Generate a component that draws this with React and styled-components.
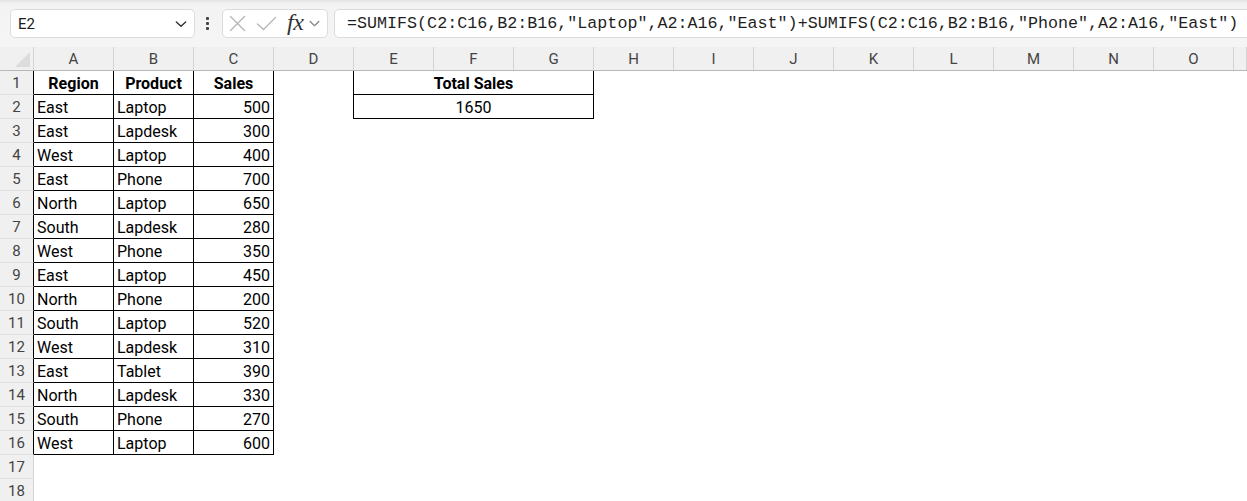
import React from 'react';
import styled, { createGlobalStyle } from 'styled-components';

const GlobalStyle = createGlobalStyle`
  html, body { margin: 0; padding: 0; background: #ffffff; overflow: hidden; }
  body { font-family: Roboto, "Liberation Sans", sans-serif; }
`;

const COLS = ['A', 'B', 'C', 'D', 'E', 'F', 'G', 'H', 'I', 'J', 'K', 'L', 'M', 'N', 'O'];
const GRID = `34px repeat(${COLS.length}, 80px) 1fr`;

const data = [
  ['East', 'Laptop', 500],
  ['East', 'Lapdesk', 300],
  ['West', 'Laptop', 400],
  ['East', 'Phone', 700],
  ['North', 'Laptop', 650],
  ['South', 'Lapdesk', 280],
  ['West', 'Phone', 350],
  ['East', 'Laptop', 450],
  ['North', 'Phone', 200],
  ['South', 'Laptop', 520],
  ['West', 'Lapdesk', 310],
  ['East', 'Tablet', 390],
  ['North', 'Lapdesk', 330],
  ['South', 'Phone', 270],
  ['West', 'Laptop', 600],
];

const Page = styled.div`
  width: 1247px;
  height: 501px;
  overflow: hidden;
  background: #ffffff;
`;

const Toolbar = styled.div`
  display: flex;
  align-items: center;
  height: 47px;
  padding: 9px 0 9px 10px;
  box-sizing: border-box;
  background: linear-gradient(#e4e4e4 0px, #f3f3f3 4px, #f5f5f5 100%);
`;

const NameBox = styled.div`
  display: flex;
  align-items: center;
  justify-content: space-between;
  width: 185px;
  height: 29px;
  box-sizing: border-box;
  padding: 0 6px 0 7px;
  background: #fff;
  border: 1px solid #dcdcdc;
  border-radius: 5px;
  font-size: 15px;
  color: #1a1a1a;
`;

const Dots = styled.div`
  display: flex;
  flex-direction: column;
  gap: 2px;
  margin: 0 13px 0 11px;
  span {
    width: 3px;
    height: 3px;
    background: #444;
    border-radius: 1px;
  }
`;

const FxBox = styled.div`
  display: flex;
  align-items: center;
  width: 106px;
  height: 29px;
  box-sizing: border-box;
  padding: 0 2px 0 5px;
  gap: 9px;
  background: #fff;
  border: 1px solid #dcdcdc;
  border-radius: 5px;
`;

const Fx = styled.span`
  font-family: "Liberation Serif", serif;
  font-style: italic;
  font-size: 24px;
  line-height: 1;
  color: #333;
  margin: -3px -4px 0 1px;
  letter-spacing: -0.5px;
`;

const FormulaInput = styled.div`
  flex: 1;
  display: flex;
  align-items: center;
  height: 29px;
  margin-left: 6px;
  margin-right: -20px;
  box-sizing: border-box;
  padding-left: 12px;
  background: #fff;
  border: 1px solid #dcdcdc;
  border-radius: 5px;
  font-family: "Liberation Mono", "DejaVu Sans Mono", monospace;
  font-size: 16.7px;
  color: #1f1f1f;
  white-space: nowrap;
  overflow: hidden;
`;

const HeaderRow = styled.div`
  display: grid;
  grid-template-columns: ${GRID};
  height: 24px;
  background: #f0f0f0;
  border-bottom: 1px solid #b8b8b8;
  box-sizing: border-box;
`;

const Corner = styled.div`
  position: relative;
  border-right: 1px solid #d4d4d4;
  &::after {
    content: '';
    position: absolute;
    right: 3px;
    bottom: 3px;
    border-style: solid;
    border-width: 0 0 15px 15px;
    border-color: transparent transparent #dcdcdc transparent;
  }
`;

const ColHead = styled.div`
  display: flex;
  align-items: center;
  justify-content: center;
  border-right: 1px solid #d4d4d4;
  font-size: 15px;
  color: #444;
`;

const Row = styled.div`
  display: grid;
  grid-template-columns: ${GRID};
  height: 24px;
`;

const RowHead = styled.div`
  display: flex;
  align-items: center;
  justify-content: center;
  background: #f0f0f0;
  border-right: 1px solid ${p => (p.$inTable ? '#000' : '#d4d4d4')};
  border-bottom: 1px solid #e2e2e2;
  font-size: 15px;
  color: #444;
  box-sizing: border-box;
`;

const Cell = styled.div`
  display: flex;
  align-items: center;
  justify-content: ${p => (p.$align === 'right' ? 'flex-end' : p.$align === 'center' ? 'center' : 'flex-start')};
  padding: 1px 3px 0 3px;
  box-sizing: border-box;
  font-size: 16px;
  font-weight: ${p => (p.$bold ? 700 : 400)};
  color: #000;
  border-right: ${p => (p.$boxed ? '1px solid #000' : 'none')};
  border-bottom: ${p => (p.$boxed ? '1px solid #000' : 'none')};
  border-left: ${p => (p.$leftEdge ? '1px solid #000' : 'none')};
  margin-left: ${p => (p.$leftEdge ? '-1px' : '0')};
  grid-column: ${p => (p.$span ? `span ${p.$span}` : 'auto')};
  white-space: nowrap;
`;

const Chevron = ({ size = 12, color = '#333' }) => (
  <svg width={size} height={size} viewBox="0 0 12 12">
    <path d="M2 4.2 L6 8 L10 4.2" fill="none" stroke={color} strokeWidth="1.2" strokeLinecap="round" strokeLinejoin="round" />
  </svg>
);

const Cross = () => (
  <svg width="19" height="19" viewBox="0 0 19 19">
    <path d="M2.5 2.5 L16.5 16.5 M16.5 2.5 L2.5 16.5" stroke="#b4b4b4" strokeWidth="1.3" strokeLinecap="round" />
  </svg>
);

const Check = () => (
  <svg width="21" height="19" viewBox="0 0 21 19">
    <path d="M1.5 10 L7.5 15.5 L19.5 3.5" fill="none" stroke="#b4b4b4" strokeWidth="1.3" strokeLinecap="round" strokeLinejoin="round" />
  </svg>
);

const formula = '=SUMIFS(C2:C16,B2:B16,"Laptop",A2:A16,"East")+SUMIFS(C2:C16,B2:B16,"Phone",A2:A16,"East")';

function renderRow(r) {
  const rec = data[r - 2];
  const inTable = r <= 16;
  const cells = [];
  if (r === 1) {
    cells.push(<Cell key="a" $boxed $bold $align="center">Region</Cell>);
    cells.push(<Cell key="b" $boxed $bold $align="center">Product</Cell>);
    cells.push(<Cell key="c" $boxed $bold $align="center">Sales</Cell>);
  } else if (rec) {
    cells.push(<Cell key="a" $boxed>{rec[0]}</Cell>);
    cells.push(<Cell key="b" $boxed>{rec[1]}</Cell>);
    cells.push(<Cell key="c" $boxed $align="right">{rec[2]}</Cell>);
  } else {
    cells.push(<Cell key="a" />, <Cell key="b" />, <Cell key="c" />);
  }
  cells.push(<Cell key="d" />);
  if (r === 1) {
    cells.push(<Cell key="efg" $span={3} $boxed $leftEdge $bold $align="center">Total Sales</Cell>);
  } else if (r === 2) {
    cells.push(<Cell key="efg" $span={3} $boxed $leftEdge $align="center">1650</Cell>);
  } else {
    cells.push(<Cell key="efg" $span={3} />);
  }
  for (let i = 7; i <= COLS.length; i++) cells.push(<Cell key={i} />);
  return (
    <Row key={r}>
      <RowHead $inTable={inTable}>{r}</RowHead>
      {cells}
    </Row>
  );
}

export default function App() {
  const rows = [];
  for (let r = 1; r <= 18; r++) rows.push(renderRow(r));
  return (
    <Page>
      <GlobalStyle />
      <Toolbar>
        <NameBox>
          <span>E2</span>
          <Chevron size={14} />
        </NameBox>
        <Dots><span /><span /><span /></Dots>
        <FxBox>
          <Cross />
          <Check />
          <Fx>fx</Fx>
          <Chevron size={13} color="#888" />
        </FxBox>
        <FormulaInput>{formula}</FormulaInput>
      </Toolbar>
      <HeaderRow>
        <Corner />
        {COLS.map(c => <ColHead key={c}>{c}</ColHead>)}
        <ColHead />
      </HeaderRow>
      {rows}
    </Page>
  );
}
